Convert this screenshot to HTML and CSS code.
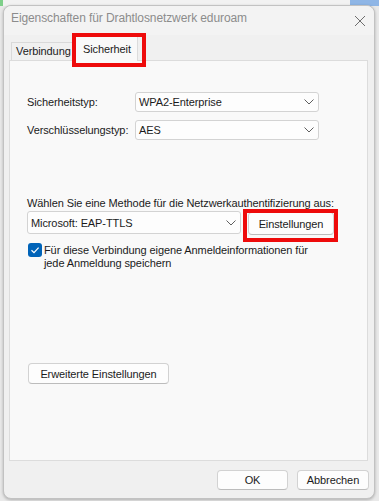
FILE: index.html
```html
<!DOCTYPE html>
<html lang="de">
<head>
<meta charset="utf-8">
<title>Eigenschaften für Drahtlosnetzwerk eduroam</title>
<link rel="stylesheet" href="styles.css">
</head>
<body>
<div class="desk-strip"></div>
<div class="window">
  <div class="titlebar">
    <span class="title">Eigenschaften für Drahtlosnetzwerk eduroam</span>
    <svg class="close" width="12" height="12" viewBox="0 0 12 12"><path d="M1 1L11 11M11 1L1 11" stroke="#6e6e6e" stroke-width="1" fill="none"/></svg>
  </div>
  <div class="tabs">
    <div class="tab">Verbindung</div>
    <div class="tab active">Sicherheit<span class="mark mark-tab"></span></div>
  </div>
  <div class="panel">
    <div class="row first">
      <span class="label">Sicherheitstyp:</span>
      <div class="select type">WPA2-Enterprise<svg class="chev" width="10" height="6" viewBox="0 0 10 6"><path d="M0.5 0.5L5 5L9.5 0.5" stroke="#5f5f5f" fill="none"/></svg></div>
    </div>
    <div class="row">
      <span class="label">Verschlüsselungstyp:</span>
      <div class="select type">AES<svg class="chev" width="10" height="6" viewBox="0 0 10 6"><path d="M0.5 0.5L5 5L9.5 0.5" stroke="#5f5f5f" fill="none"/></svg></div>
    </div>
    <p class="method-label">Wählen Sie eine Methode für die Netzwerkauthentifizierung aus:</p>
    <div class="method-row">
      <div class="select method">Microsoft: EAP-TTLS<svg class="chev" width="10" height="6" viewBox="0 0 10 6"><path d="M0.5 0.5L5 5L9.5 0.5" stroke="#5f5f5f" fill="none"/></svg></div>
      <div class="annot">
        <button class="btn settings">Einstellungen</button>
        <span class="mark mark-btn"></span>
      </div>
    </div>
    <div class="check-row">
      <span class="checkbox"><svg width="14" height="14" viewBox="0 0 14 14"><path d="M3.5 7.2L6 9.6L10.6 4.6" stroke="#fff" stroke-width="1.2" fill="none"/></svg></span>
      <span class="check-text">Für diese Verbindung eigene Anmeldeinformationen für<br>jede Anmeldung speichern</span>
    </div>
    <button class="btn advanced">Erweiterte Einstellungen</button>
  </div>
  <div class="footer">
    <button class="btn ok">OK</button>
    <button class="btn cancel">Abbrechen</button>
  </div>
</div>
</body>
</html>
```
FILE: styles.css
```css
* { box-sizing: border-box; }
html, body {
  margin: 0;
  padding: 0;
}
body {
  width: 379px;
  height: 501px;
  overflow: hidden;
  background: #e9e9e9;
  font-family: "Liberation Sans", Arial, sans-serif;
  font-size: 11px;
  letter-spacing: -0.1px;
  color: #1b1b1b;
  position: relative;
}
.desk-strip {
  position: absolute;
  left: 0;
  top: 0;
  width: 379px;
  height: 6px;
  background: linear-gradient(90deg, #7fcf8a 0, #7fcf8a 3px, #f2f2f2 3px, #f2f2f2 350px, #8fb6e6 350px);
}
.window {
  position: relative;
  margin: 5px 0 0 3px;
  width: 372px;
  height: 494px;
  background: #f0f0f0;
  border: 1px solid #c2c2c2;
  border-radius: 8px;
  box-shadow: 0 1px 3px rgba(0,0,0,0.25);
  display: flex;
  flex-direction: column;
}
.titlebar {
  height: 29px;
  flex: none;
  display: flex;
  align-items: flex-start;
  justify-content: space-between;
  padding: 5px 7px 0 7px;
  border-top-left-radius: 8px;
  border-top-right-radius: 8px;
  background: #f3f3f3;
}
.title {
  font-size: 12px;
  color: #8c8c8c;
  line-height: 14px;
  letter-spacing: -0.1px;
}
.close {
  margin-top: 4px;
  margin-right: 1px;
}
.tabs {
  display: flex;
  align-items: flex-end;
  height: 25px;
  padding-left: 7px;
  flex: none;
}
.tab {
  height: 18px;
  padding: 0 0 0 4px;
  width: 62px;
  line-height: 17px;
  border: 1px solid #d9d9d9;
  border-bottom: none;
  background: #f0f0f0;
  white-space: nowrap;
}
.tab.active {
  position: relative;
  z-index: 1;
  height: 26px;
  width: 65px;
  margin-left: 0;
  margin-bottom: -1px;
  padding: 5px 0 0 9px;
  background: #f9f9f9;
  border-color: #dcdcdc;
}
.mark {
  position: absolute;
  border: 4px solid #ee0b0b;
  pointer-events: none;
}
.mark-tab {
  left: -2px;
  top: -3px;
  width: 74px;
  height: 34px;
}
.panel {
  margin: 0 6px 0 5px;
  height: 401px;
  flex: none;
  background: #f9f9f9;
  border: 1px solid #dcdcdc;
  padding: 31px 0 0 17px;
  display: flex;
  flex-direction: column;
  align-items: flex-start;
}
.row {
  display: flex;
  align-items: center;
  margin-top: 8px;
}
.row.first { margin-top: 0; }
.label {
  width: 108px;
  flex: none;
}
.select {
  position: relative;
  height: 20px;
  background: #fdfdfd;
  border: 1px solid #d3d3d3;
  border-radius: 3px;
  padding-left: 3px;
  line-height: 18px;
  display: flex;
  align-items: center;
  justify-content: space-between;
  padding-right: 4px;
}
.select.type { width: 184px; }
.select.method { width: 214px; height: 23px; }
.chev { flex: none; }
.method-label {
  margin: 56px 0 0 0;
  line-height: 15px;
}
.method-row {
  display: flex;
  align-items: flex-start;
  gap: 7px;
  margin-top: 0;
}
.annot {
  position: relative;
  margin-top: 1px;
}
.mark-btn {
  left: -5px;
  top: -3px;
  width: 95px;
  height: 33px;
}
.btn {
  font-family: "Liberation Sans", Arial, sans-serif;
  font-size: 11px;
  letter-spacing: -0.1px;
  color: #1b1b1b;
  background: #fdfdfd;
  border: 1px solid #d2d2d2;
  border-bottom-color: #bcbcbc;
  border-radius: 4px;
  padding: 0;
  margin: 0;
  display: block;
}
.btn.settings { width: 86px; height: 23px; }
.check-row {
  display: flex;
  align-items: flex-start;
  margin-top: 8px;
  margin-left: 1px;
}
.checkbox {
  width: 14px;
  height: 14px;
  flex: none;
  background: #0063b8;
  border-radius: 3px;
  display: block;
}
.checkbox svg { display: block; }
.check-text {
  margin-left: 2px;
  line-height: 13px;
  margin-top: 1px;
}
.btn.advanced {
  margin-top: 93px;
  margin-left: 1px;
  width: 141px;
  height: 21px;
}
.footer {
  display: flex;
  justify-content: flex-end;
  gap: 9px;
  padding: 9px 5px 0 0;
}
.btn.ok { width: 71px; height: 20px; }
.btn.cancel { width: 72px; height: 20px; }
```
